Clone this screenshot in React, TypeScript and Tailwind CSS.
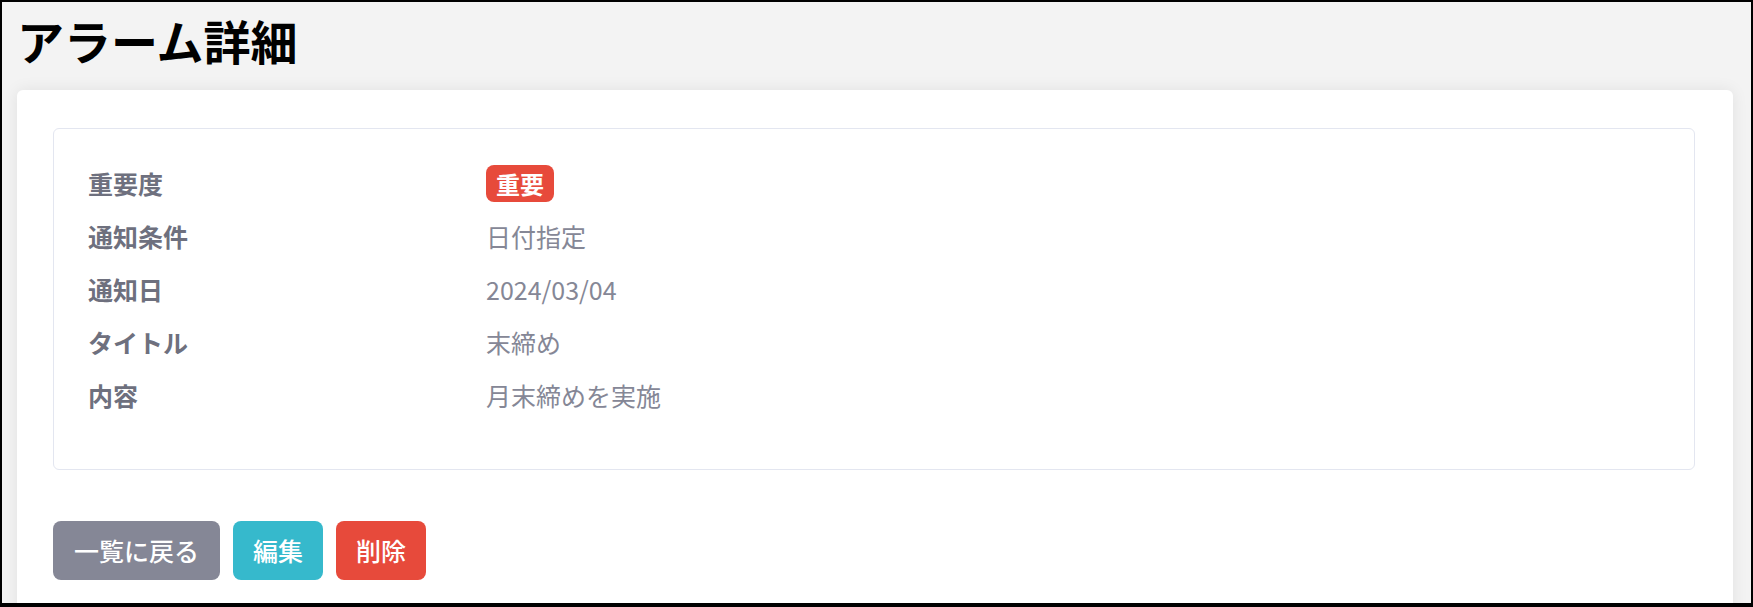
const rows: { label: string; value: string }[] = [
  { label: "通知条件", value: "日付指定" },
  { label: "通知日", value: "2024/03/04" },
  { label: "タイトル", value: "末締め" },
  { label: "内容", value: "月末締めを実施" },
];

function App() {
  return (
    <div
      className="w-[1753px] h-[607px] overflow-hidden border-2 border-b-4 border-black bg-[#f3f3f3]"
      style={{ fontFamily: '"Noto Sans CJK JP", "Noto Sans", sans-serif' }}
    >
      {/* Page title */}
      <h1 className="pl-[15px] pt-[14px] text-[47px] leading-none font-bold text-black">
        アラーム詳細
      </h1>

      {/* Card */}
      <div className="mt-[27px] ml-[15px] w-[1716px] h-[560px] rounded-md bg-white px-[36px] pt-[38px] shadow-[0_0_16px_rgba(0,0,0,0.08)]">
        <div className="w-[1642px] rounded-md border border-[#e3e6f0] pl-[34px] pt-[28px] pb-[47px]">
          <div className="grid grid-cols-[398px_1fr]">
            <div className="h-[53px] flex items-center text-[25px] font-bold text-[#6e707e]">
              重要度
            </div>
            <div className="h-[53px] flex items-center">
              <span className="inline-flex h-[37px] items-center rounded-lg bg-[#e74a3b] px-[10px] text-[24px] font-bold leading-none text-white">
                重要
              </span>
            </div>
            {rows.map((r) => (
              <div key={r.label} className="contents">
                <div className="h-[53px] flex items-center text-[25px] font-bold text-[#6e707e]">
                  {r.label}
                </div>
                <div className="h-[53px] flex items-center text-[25px] text-[#858796]">
                  {r.value}
                </div>
              </div>
            ))}
          </div>
        </div>

        {/* Actions */}
        <div className="mt-[51px] flex gap-[13px]">
          <button className="h-[59px] rounded-lg bg-[#858796] px-[21px] text-[25px] font-medium text-white">
            一覧に戻る
          </button>
          <button className="h-[59px] rounded-lg bg-[#36b9cc] px-[20px] text-[25px] font-medium text-white">
            編集
          </button>
          <button className="h-[59px] rounded-lg bg-[#e74a3b] px-[20px] text-[25px] font-medium text-white">
            削除
          </button>
        </div>
      </div>
    </div>
  );
}

export default App;
